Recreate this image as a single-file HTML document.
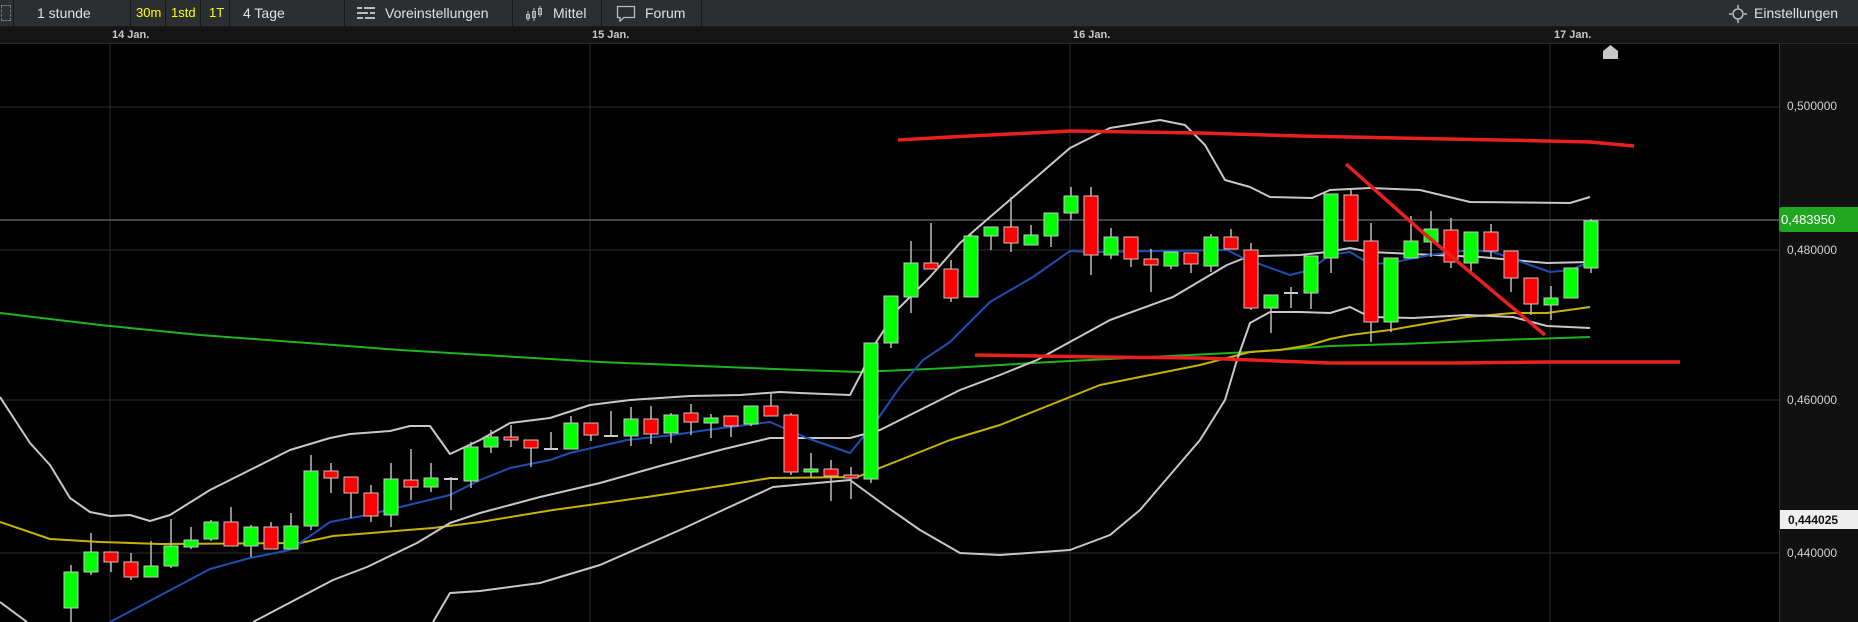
<!DOCTYPE html>
<html><head><meta charset="utf-8"><style>
html,body{margin:0;padding:0;background:#000;width:1858px;height:622px;overflow:hidden;font-family:"Liberation Sans",sans-serif}
#tb{position:absolute;left:0;top:0;width:1858px;height:26px;background:#2c2f32;border-bottom:1px solid #1a1a1a}
.t{position:absolute;top:0;height:26px;line-height:26px;font-size:14px;color:#e0e0e0;white-space:nowrap}
.y{color:#ffff00;font-size:13px}
.sep{position:absolute;top:0;width:1px;height:26px;background:#16181a}
#dr{position:absolute;left:0;top:27px;width:1858px;height:16px;background:#151515;border-bottom:1px solid #2a2a2a}
.d{position:absolute;top:27px;font-size:11px;color:#c8c8c8;line-height:16px;font-weight:bold}
#ax{position:absolute;left:1779px;top:44px;width:79px;height:578px;background:#111;border-left:1px solid #333}
.p{position:absolute;left:1787px;font-size:12px;color:#d0d0d0}
</style></head><body>
<div id="tb"></div>
<div class="sep" style="left:13px"></div><div class="sep" style="left:130px"></div><div class="sep" style="left:165px"></div><div class="sep" style="left:200px"></div><div class="sep" style="left:229px"></div><div class="sep" style="left:344px"></div><div class="sep" style="left:512px"></div><div class="sep" style="left:601px"></div><div class="sep" style="left:701px"></div>
<div style="position:absolute;left:1px;top:5px;width:8px;height:14px;border:1px dashed #777"></div>
<div class="t" style="left:37px">1 stunde</div>
<div class="t y" style="left:136px">30m</div>
<div class="t y" style="left:171px">1std</div>
<div class="t y" style="left:209px">1T</div>
<div class="t" style="left:243px">4 Tage</div>
<svg style="position:absolute;left:356px;top:6px" width="20" height="15"><g stroke="#bbb" stroke-width="2"><line x1="1" y1="2" x2="19" y2="2"/><line x1="1" y1="7" x2="19" y2="7"/><line x1="1" y1="12" x2="19" y2="12"/></g><g fill="#2c2f32"><rect x="6" y="0" width="2" height="4"/><rect x="12" y="5" width="2" height="4"/><rect x="7" y="10" width="2" height="4"/></g></svg>
<div class="t" style="left:385px">Voreinstellungen</div>
<svg style="position:absolute;left:525px;top:5px" width="20" height="17"><g stroke="#bbb" fill="none" stroke-width="1"><line x1="3" y1="6" x2="3" y2="16"/><rect x="1.5" y="9.5" width="3" height="4"/><line x1="9" y1="3" x2="9" y2="16"/><rect x="7.5" y="6.5" width="3" height="6"/><line x1="15" y1="1" x2="15" y2="12"/><rect x="13.5" y="3.5" width="3" height="6"/></g></svg>
<div class="t" style="left:553px">Mittel</div>
<svg style="position:absolute;left:616px;top:5px" width="20" height="17"><path d="M1.5 1.5h17v11H8l-4 3.5v-3.5H1.5z" fill="none" stroke="#bbb" stroke-width="1.3"/></svg>
<div class="t" style="left:645px">Forum</div>
<svg style="position:absolute;left:1729px;top:5px" width="18" height="18"><circle cx="9" cy="9" r="5" fill="none" stroke="#bbb" stroke-width="1.5"/><g stroke="#bbb" stroke-width="1.5"><line x1="9" y1="0" x2="9" y2="3"/><line x1="9" y1="15" x2="9" y2="18"/><line x1="0" y1="9" x2="3" y2="9"/><line x1="15" y1="9" x2="18" y2="9"/></g></svg>
<div class="t" style="left:1754px">Einstellungen</div>
<div id="dr"></div>
<div class="d" style="left:112px">14 Jan.</div>
<div class="d" style="left:592px">15 Jan.</div>
<div class="d" style="left:1073px">16 Jan.</div>
<div class="d" style="left:1554px">17 Jan.</div>
<div id="ax"></div>
<svg id="ch" style="position:absolute;left:0;top:0" width="1858" height="622"></svg>
<div class="p" style="top:99px">0,500000</div>
<div class="p" style="top:243px">0,480000</div>
<div class="p" style="top:393px">0,460000</div>
<div class="p" style="top:546px">0,440000</div>
<div style="position:absolute;left:1779px;top:207px;width:79px;height:25px;background:#1fa81f;border-radius:3px 0 0 3px"></div>
<div class="p" style="top:212px;left:1781px;color:#fff;font-size:13px">0,483950</div>
<div style="position:absolute;left:1780px;top:510px;width:78px;height:19px;background:#eee"></div>
<div class="p" style="top:513px;color:#111;font-weight:bold;left:1788px">0,444025</div>
<script>
var s='';
function pl(pts,c,w){s+='<polyline fill="none" stroke="'+c+'" stroke-width="'+w+'" stroke-linejoin="round" points="'+pts+'"/>';}
[107,250,400,553].forEach(function(y){s+='<line x1="0" y1="'+y+'" x2="1779" y2="'+y+'" stroke="#2e2e2e"/>';});
[110,590,1070,1550].forEach(function(x){s+='<line x1="'+x+'" y1="44" x2="'+x+'" y2="622" stroke="#2e2e2e"/>';});
s+='<line x1="0" y1="220" x2="1779" y2="220" stroke="#8a8a8a"/>';
pl("0,313 100,325 200,335 400,350 600,362 800,370 860,372 950,368 1050,362 1150,357 1250,352 1330,346 1400,344 1500,340 1590,337","#1fb31f",2);
pl("0,522 50,539 100,542 160,544 300,543 333,536 433,528 480,522 553,510 647,497 727,485 770,478 857,477 900,460 950,440 1000,425 1050,405 1100,385 1150,375 1200,365 1250,352 1280,350 1310,345 1330,339 1350,335 1390,330 1430,323 1467,317 1513,313 1547,313 1590,307","#c8b400",2);
pl("0,397 30,443 50,465 70,498 90,512 110,516 130,515 150,521 170,515 210,490 250,470 290,450 330,438 350,434 390,431 410,426 430,426 450,454 480,440 510,423 550,418 590,405 630,400 690,396 740,395 780,392 800,393 850,395 863,370 873,347 897,310 930,277 960,243 990,217 1033,180 1070,148 1110,128 1160,120 1185,125 1205,145 1225,180 1250,187 1270,197 1312,198 1330,190 1370,188 1420,190 1470,202 1570,203 1590,197","#c8c8c8",2);
pl("0,602 27,622","#c8c8c8",2);
pl("433,622 450,593 480,591 540,583 600,565 680,530 723,510 773,487 850,480 887,507 920,530 960,553 1000,555 1070,550 1110,535 1140,510 1170,475 1200,440 1225,400 1237,360 1250,323 1270,312 1300,312 1330,313 1350,307 1370,317 1413,318 1467,315 1513,317 1547,326 1590,328","#c8c8c8",2);
pl("253,622 333,580 367,567 417,543 450,523 480,513 540,497 600,483 660,466 720,450 770,438 850,438 880,430 920,410 960,390 1000,375 1037,360 1110,320 1173,297 1227,265 1247,257 1260,256 1300,255 1327,252 1350,248 1370,252 1413,254 1480,257 1513,260 1547,263 1590,262","#c8c8c8",2);
pl("110,622 210,569 250,558 290,550 330,522 367,515 450,495 480,480 510,468 550,460 570,453 627,440 673,435 707,430 770,422 807,438 850,453 877,420 900,387 923,360 950,342 990,302 1033,277 1070,251 1093,252 1227,250 1243,258 1290,275 1310,270 1330,255 1350,252 1370,264 1390,263 1430,255 1470,250 1493,252 1530,265 1550,272 1570,270 1590,262","#1e4fb0",2);
var c=[['g',572,608,565,622],['g',552,572,533,575],['r',552,562,552,572],['r',562,577,553,580],['g',566,577,541,577],['g',546,566,519,568],['g',540,547,527,549],['g',522,539,520,541],['r',522,546,507,546],['g',527,546,525,557],['r',527,549,522,549],['g',526,549,513,549],['g',471,526,455,530],['r',471,478,463,493],['r',477,493,477,518],['r',493,516,485,522],['g',479,515,463,527],['r',480,487,449,500],['g',478,487,463,492],['d',479,479,477,510],['g',447,481,442,488],['g',437,447,430,453],['r',437,440,425,447],['r',440,448,440,467],['d',449,449,432,449],['g',423,449,416,449],['r',423,435,423,441],['d',436,436,411,436],['g',419,436,407,446],['r',419,434,406,444],['g',415,433,413,443],['r',413,422,404,435],['g',418,423,414,438],['r',416,426,416,437],['g',406,424,406,426],['r',406,416,392,416],['r',415,472,413,475],['g',469,472,453,477],['r',469,476,460,501],['r',475,478,467,499],['g',343,479,343,483],['g',296,343,296,348],['g',263,297,241,313],['r',263,269,223,269],['r',269,298,260,302],['g',236,297,234,297],['g',227,236,227,250],['r',227,243,197,252],['g',235,245,225,245],['g',213,236,213,247],['g',196,213,187,220],['r',196,255,187,275],['g',237,255,228,259],['r',237,259,237,267],['r',259,265,249,292],['g',252,266,252,269],['r',253,264,253,273],['g',237,266,234,272],['r',237,249,229,249],['r',250,308,243,310],['g',295,308,295,333],['d',293,293,287,308],['g',256,293,256,309],['g',194,258,194,273],['r',195,241,190,241],['r',241,322,223,342],['g',258,322,258,332],['g',241,258,216,258],['g',229,242,211,257],['r',230,262,218,268],['g',232,263,232,272],['r',232,251,224,257],['r',251,278,251,292],['r',278,304,278,315],['g',298,305,286,320],['g',268,298,268,298],['g',221,268,219,273]];
c.forEach(function(k,i){var x=71+20*i;
s+='<line x1="'+x+'" y1="'+k[3]+'" x2="'+x+'" y2="'+k[4]+'" stroke="#bbb" stroke-width="1.5"/>';
if(k[0]=='d'){s+='<rect x="'+(x-7)+'" y="'+(k[1]-1)+'" width="14" height="2" fill="#ccc"/>';}
else{var h=Math.max(k[2]-k[1],3);s+='<rect x="'+(x-7)+'" y="'+k[1]+'" width="14" height="'+h+'" fill="'+(k[0]=='g'?'#00ff00':'#ff0000')+'" stroke="#c8c8c8" stroke-width="1"/>';}
});
pl("898,140 950,137 1070,131 1200,133 1300,136 1500,140 1590,142 1634,146","#e82020",3.5);
pl("975,355 1100,357 1200,358 1330,363 1450,363 1550,362 1680,362","#e82020",3.5);
pl("1346,164 1420,230 1545,335","#e82020",3.5);
s+='<path d="M1603 59V51L1610.5 45L1618 51V59Z" fill="#c8c8c8"/>';
document.getElementById('ch').innerHTML=s;
</script>
</body></html>
